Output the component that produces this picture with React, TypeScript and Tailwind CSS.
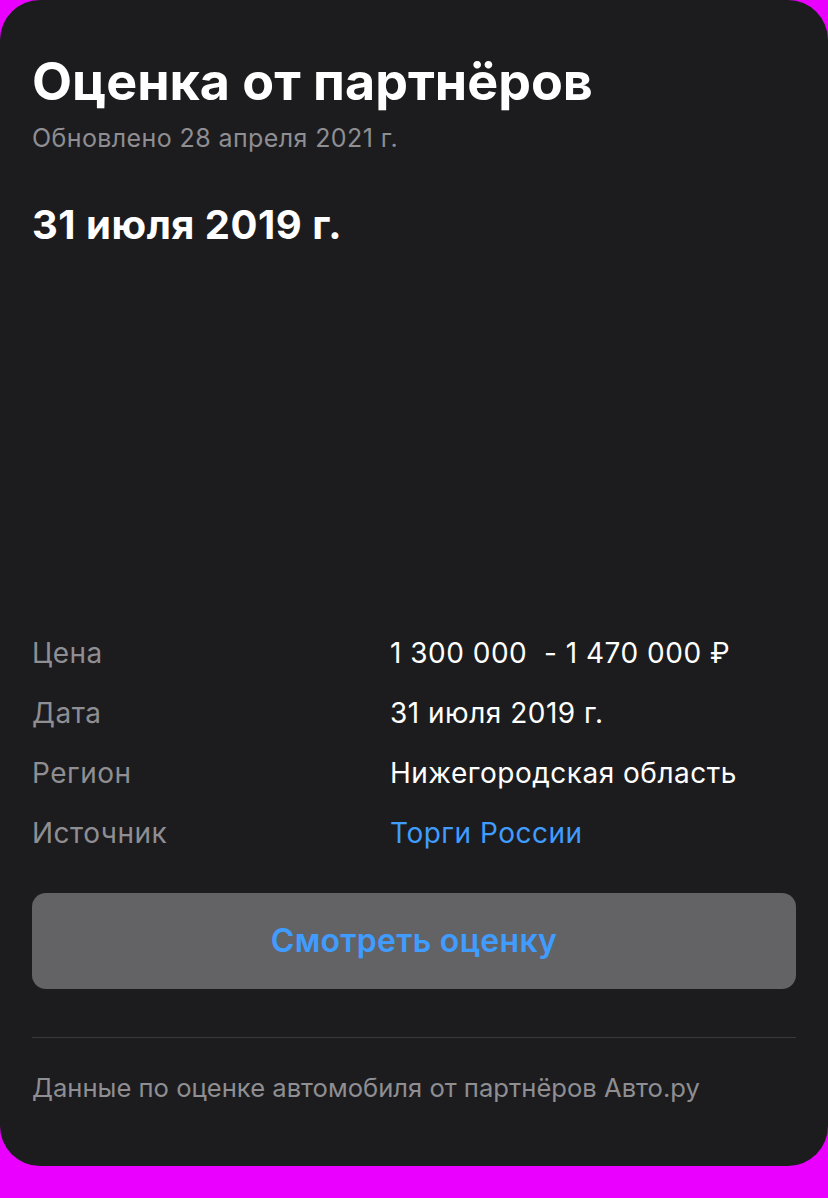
import React from 'react';

const font = { fontFamily: 'Inter, "Noto Sans", sans-serif' };

interface Row {
  label: string;
  value: string;
  link?: boolean;
}

const rows: Row[] = [
  { label: 'Цена', value: '1 300 000  - 1 470 000 ₽' },
  { label: 'Дата', value: '31 июля 2019 г.' },
  { label: 'Регион', value: 'Нижегородская область' },
  { label: 'Источник', value: 'Торги России', link: true },
];

export default function App() {
  return (
    <div className="min-h-screen bg-[#ea00ff]" style={font}>
      <div className="bg-[#1c1c1e] rounded-[40px] h-[1166px] px-[32px] flex flex-col">
        <h1 className="pt-[50px] text-[52px] leading-[64px] font-bold text-white whitespace-pre">Оценка от партнёров</h1>
        <p className="mt-[8px] text-[25px] leading-[32px] tracking-[0.4px] text-[#8e8e93]">Обновлено 28 апреля 2021 г.</p>
        <h2 className="mt-[48px] text-[40px] leading-[46px] tracking-[0.5px] font-bold text-white">31 июля 2019 г.</h2>

        {/* chart area (empty) */}
        <div className="h-[375px]" />

        <div className="flex flex-col">
          {rows.map((r) => (
            <div key={r.label} className="flex h-[60px] leading-[60px] text-[28px] tracking-[0.5px]">
              <span className="w-[358px] text-[#8e8e93]">{r.label}</span>
              <span className={`whitespace-pre ${r.link ? 'text-[#409cff]' : 'text-white'}`}>{r.value}</span>
            </div>
          ))}
        </div>

        <button className="mt-[30px] h-[96px] w-full rounded-[14px] bg-[#636366] text-[32px] tracking-[0.3px] font-semibold text-[#409cff]">
          Смотреть оценку
        </button>

        <div className="mt-[48px] h-px bg-[#38383a]" />

        <p className="mt-[34px] text-[25.6px] leading-[32px] text-[#8e8e93]">Данные по оценке автомобиля от партнёров Авто.ру</p>
      </div>
    </div>
  );
}
